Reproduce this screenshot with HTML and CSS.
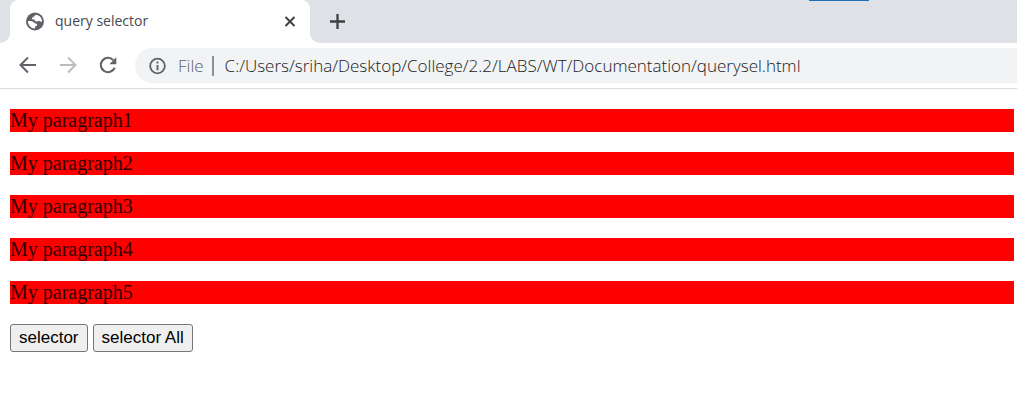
FILE: index.html
```html
<!DOCTYPE html>
<html lang="en">
<head>
<meta charset="utf-8">
<title>query selector</title>
<link rel="stylesheet" href="styles.css">
</head>
<body>
<header class="browser">
  <div class="tab-strip">
    <div class="tab">
      <svg class="icon" width="20" height="20" viewBox="0 0 20 20" aria-hidden="true">
        <circle cx="10" cy="9.500" r="9" fill="#5f6368"/>
        <path d="M11.500 2.700C9.300 3 9.600 4.400 8.300 5C6.400 5.700 6.500 7.700 8.900 7.600C10.300 7.600 9.600 9.300 11 9.600C12.600 9.800 13.300 8.500 14.400 9C15.300 9.800 16.300 10 17 9.500C17 6 14.800 3.500 11.500 2.700ZM3 9C3 13.500 6 16.500 10 16.500V14.400C11.500 14.300 12.400 13.500 12 12.200C11.600 11.100 9.800 11.700 8.900 10.500C8 9.100 5 8.800 3 9Z" fill="#fff"/>
      </svg>
      <span class="tab-title">query selector</span>
      <button class="icon-button" type="button" aria-label="Close tab">
        <svg class="icon" width="20" height="20" viewBox="0 0 20 20"><path d="M5.500 5 14.500 14M14.500 5 5.500 14" stroke="#3c4043" stroke-width="2"/></svg>
      </button>
    </div>
    <button class="icon-button new-tab" type="button" aria-label="New tab">
      <svg class="icon" width="20" height="20" viewBox="0 0 20 20"><path d="M10.500 2V17M3 9.500H18" stroke="#3c4043" stroke-width="2.300"/></svg>
    </button>
    <span class="window-accent"></span>
  </div>
  <nav class="toolbar" aria-label="Navigation">
    <button class="icon-button" type="button" aria-label="Back">
      <svg class="icon" width="20" height="20" viewBox="0 0 20 20"><path d="M18 9H3M10 1.500 2.500 9 10 16.500" fill="none" stroke="#5f6368" stroke-width="2"/></svg>
    </button>
    <button class="icon-button" type="button" aria-label="Forward">
      <svg class="icon" width="20" height="20" viewBox="0 0 20 20"><path d="M2 9H17M10 1.500 17.500 9 10 16.500" fill="none" stroke="#babcbe" stroke-width="2"/></svg>
    </button>
    <button class="icon-button" type="button" aria-label="Reload">
      <svg class="icon" width="20" height="20" viewBox="0 0 20 20"><path d="M16.700 11.700A7.200 7.200 0 1 1 15.300 4.100" fill="none" stroke="#5f6368" stroke-width="2.100"/><path d="M18.300 1.200V8.200H11.300Z" fill="#5f6368"/></svg>
    </button>
    <div class="address-bar">
      <svg class="icon" width="20" height="20" viewBox="0 0 20 20" aria-hidden="true"><circle cx="10.500" cy="10" r="7.300" fill="none" stroke="#5f6368" stroke-width="1.800"/><path d="M10.500 5.500V7.400M10.500 9V14.300" stroke="#5f6368" stroke-width="1.900"/></svg>
      <label class="scheme" for="address">File</label>
      <input class="address" id="address" type="text" value="C:/Users/sriha/Desktop/College/2.2/LABS/WT/Documentation/querysel.html" spellcheck="false">
    </div>
  </nav>
</header>
<main class="page">
  <p class="paragraph">My paragraph1</p>
  <p class="paragraph">My paragraph2</p>
  <p class="paragraph">My paragraph3</p>
  <p class="paragraph">My paragraph4</p>
  <p class="paragraph">My paragraph5</p>
  <div class="actions">
    <button class="action" type="button">selector</button>
    <button class="action" type="button">selector All</button>
  </div>
</main>
</body>
</html>
```
FILE: styles.css
```css
* {
  box-sizing: border-box;
}

body {
  margin: 0;
  background: #fff;
  color: #000;
}

.browser {
  border-bottom: 1px solid #dadce0;
  font-family: "Open Sans", "Noto Sans", sans-serif;
}

.icon {
  display: block;
  flex: none;
}

.icon-button {
  padding: 0;
  border: 0;
  background: transparent;
}

.tab-strip {
  position: relative;
  display: flex;
  align-items: stretch;
  height: 43px;
  background: #fff;
}

.tab-strip::before {
  content: "";
  width: 10px;
  background: #dee1e6;
  border-bottom-right-radius: 10px;
}

.tab {
  display: flex;
  align-items: center;
  gap: 10px;
  width: 300px;
  padding: 0 10px 0 15px;
  background: radial-gradient(circle at 10px 10px, #fff 10px, #dee1e6 11px) left top / 10px 10px no-repeat,
    radial-gradient(circle at 0 10px, #fff 10px, #dee1e6 11px) right top / 10px 10px no-repeat;
}

.tab-title {
  flex: 1;
  padding-bottom: 2px;
  color: #45494d;
  font-size: 14px;
  line-height: 20px;
}

.new-tab {
  flex: 1;
  padding-left: 17px;
  background: #dee1e6;
  border-bottom-left-radius: 10px;
}

.window-accent {
  position: absolute;
  top: 0;
  right: 148px;
  width: 60px;
  height: 1px;
  background: #1c6fb8;
}

.toolbar {
  display: flex;
  align-items: center;
  gap: 20px;
  height: 45px;
  padding-left: 18px;
}

.address-bar {
  display: flex;
  flex: 1;
  align-items: center;
  height: 35px;
  margin-left: -3px;
  padding-left: 12px;
  background: #f1f3f4;
  border-radius: 18px 0 0 18px;
}

.scheme {
  margin-left: 11px;
  padding-right: 8px;
  border-right: 2px solid #8d9195;
  color: #5f6368;
  font-size: 17px;
  font-weight: 350;
  line-height: 20px;
}

.address {
  flex: 1;
  min-width: 0;
  padding: 0 0 0 11px;
  border: 0;
  outline: 0;
  background: transparent;
  color: #202124;
  font: 350 17px/24px "Open Sans", "Noto Sans", sans-serif;
}

.page {
  padding: 20px 3px 20px 10px;
  font: 20px/23px "Liberation Serif", "Times New Roman", serif;
}

.paragraph {
  margin: 0 0 20px;
  background: #f00;
  color: #300;
}

.actions {
  display: flex;
  gap: 5px;
}

.action {
  height: 28px;
  padding: 0 8px;
  border: 1px solid #767676;
  border-radius: 3px;
  background: #efefef;
  color: #000;
  font: 17px/20px "Liberation Sans", Arial, sans-serif;
}
```
